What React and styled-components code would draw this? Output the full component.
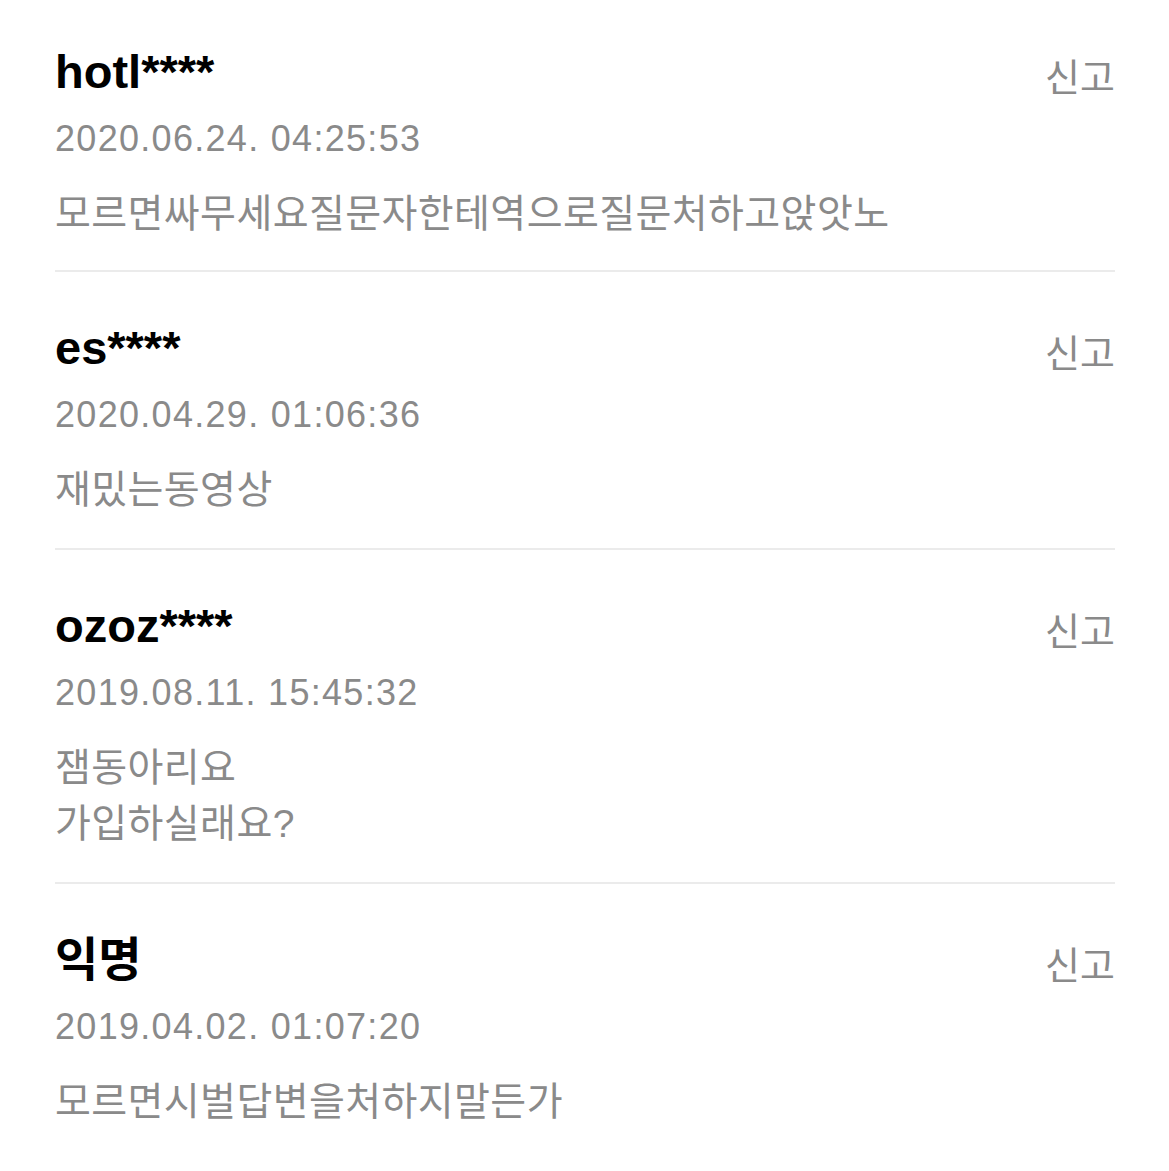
import styled, { createGlobalStyle } from 'styled-components';

const comments = [
  { id: 1, user: 'hotl****', date: '2020.06.24. 04:25:53', text: ['모르면싸무세요질문자한테역으로질문처하고앉앗노'] },
  { id: 2, user: 'es****', date: '2020.04.29. 01:06:36', text: ['재밌는동영상'] },
  { id: 3, user: 'ozoz****', date: '2019.08.11. 15:45:32', text: ['잼동아리요', '가입하실래요?'] },
  { id: 4, user: '익명', date: '2019.04.02. 01:07:20', text: ['모르면시벌답변을처하지말든가'] },
];

const GlobalStyle = createGlobalStyle`
  body {
    margin: 0;
    background: #fff;
    font-family: "Liberation Sans", "Noto Sans CJK KR", sans-serif;
  }
`;

const List = styled.ul`
  list-style: none;
  margin: 0;
  padding: 0 54px 0 55px;
`;

const Item = styled.li`
  display: flex;
  align-items: flex-start;
  justify-content: space-between;
  padding: 44px 0 30px;
  border-top: 2px solid #ebebeb;

  &:first-child {
    border-top: none;
    padding-top: 40px;
    padding-bottom: 28px;
  }
`;

const Body = styled.div`
  display: flex;
  flex-direction: column;
`;

const User = styled.strong`
  font-size: 47px;
  font-weight: 700;
  line-height: 64px;
  color: #000;
`;

const Date = styled.span`
  font-size: 36px;
  line-height: 70px;
  letter-spacing: 1.3px;
  color: #8a8a8a;
`;

const Text = styled.p`
  margin: 12px 0 0;
  font-size: 39px;
  line-height: 56px;
  letter-spacing: 0.4px;
  color: #8a8a8a;
`;

const Report = styled.button`
  border: none;
  background: none;
  padding: 0;
  margin-top: 6px;
  font-family: inherit;
  font-size: 38px;
  line-height: 64px;
  color: #8a8a8a;
`;

export default function App() {
  return (
    <>
      <GlobalStyle />
      <List>
        {comments.map((c) => (
          <Item key={c.id}>
            <Body>
              <User>{c.user}</User>
              <Date>{c.date}</Date>
              <Text>
                {c.text.map((line, i) => (
                  <span key={i}>
                    {i > 0 && <br />}
                    {line}
                  </span>
                ))}
              </Text>
            </Body>
            <Report>신고</Report>
          </Item>
        ))}
      </List>
    </>
  );
}
